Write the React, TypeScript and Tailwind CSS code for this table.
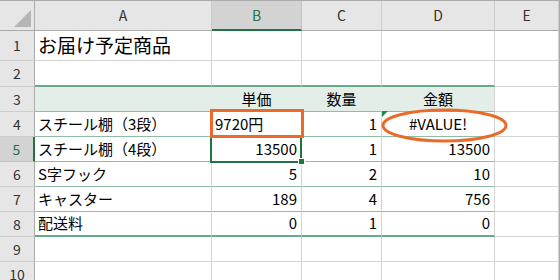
import React from "react";

type Align = "l" | "c" | "r";
type Cell = { text: string; align: Align };

const COLS = ["A", "B", "C", "D", "E"];

const ROWS: (Cell | null)[][] = [
  [{ text: "お届け予定商品", align: "l" }, null, null, null, null],
  [null, null, null, null, null],
  [null, { text: "単価", align: "c" }, { text: "数量", align: "c" }, { text: "金額", align: "c" }, null],
  [
    { text: "スチール棚（3段）", align: "l" },
    { text: "9720円", align: "l" },
    { text: "1", align: "r" },
    { text: "#VALUE!", align: "c" },
    null,
  ],
  [
    { text: "スチール棚（4段）", align: "l" },
    { text: "13500", align: "r" },
    { text: "1", align: "r" },
    { text: "13500", align: "r" },
    null,
  ],
  [
    { text: "S字フック", align: "l" },
    { text: "5", align: "r" },
    { text: "2", align: "r" },
    { text: "10", align: "r" },
    null,
  ],
  [
    { text: "キャスター", align: "l" },
    { text: "189", align: "r" },
    { text: "4", align: "r" },
    { text: "756", align: "r" },
    null,
  ],
  [
    { text: "配送料", align: "l" },
    { text: "0", align: "r" },
    { text: "1", align: "r" },
    { text: "0", align: "r" },
    null,
  ],
  [null, null, null, null, null],
  [null, null, null, null, null],
];

function alignClass(a: Align) {
  if (a === "c") return "justify-center";
  if (a === "r") return "justify-end pr-[4px]";
  return "justify-start pl-[3px]";
}

// border / fill for a body cell; r is the 1-based row number, c the column index (0 = A)
function cellClass(r: number, c: number) {
  const inTable = c <= 3;
  if (inTable && r === 2) return "bg-white border-r-[#d4d4d4] border-b-2 border-b-[#68a989]";
  if (inTable && r === 3) {
    if (c === 3) return "bg-[#e3eee8] border-r-[#d4d4d4] border-b border-b-[#8dbea5]";
    return "bg-[#e3eee8] border-r-[#e3eee8] border-b border-b-[#8dbea5]";
  }
  if (inTable && r >= 4 && r <= 7) return "bg-white border-r-[#d4d4d4] border-b border-b-[#8dbea5]";
  if (inTable && r === 8) return "bg-white border-r-[#d4d4d4] border-b-2 border-b-[#68a989]";
  return "bg-white border-r-[#d4d4d4] border-b border-b-[#d4d4d4]";
}

function ColHeader({ label }: { label: string }) {
  if (label === "B") {
    return (
      <div className="flex items-center justify-center bg-[#d3d3d3] border-r border-r-[#c4c4c4] border-b-2 border-b-[#217346] text-[14px] text-[#217346]">
        {label}
      </div>
    );
  }
  return (
    <div className="flex items-center justify-center bg-[#e6e6e6] border-r border-r-[#cdcdcd] border-b border-b-[#ababab] text-[14px] text-[#333]">
      {label}
    </div>
  );
}

function RowHeader({ n }: { n: number }) {
  if (n === 5) {
    return (
      <div className="flex items-center justify-center bg-[#d3d3d3] border-r-2 border-r-[#217346] border-b border-b-[#c4c4c4] text-[14px] text-[#217346]">
        {n}
      </div>
    );
  }
  return (
    <div className="flex items-center justify-center bg-[#e6e6e6] border-r border-r-[#ababab] border-b border-b-[#cdcdcd] text-[14px] text-[#333]">
      {n}
    </div>
  );
}

export default function App() {
  return (
    <div className="w-[560px] h-[280px] overflow-hidden bg-white border-t border-t-[#ababab] border-r border-r-[#ababab] font-['Noto_Sans_CJK_JP','Noto_Sans',sans-serif]">
      <div className="relative grid grid-cols-[35px_177px_90px_80px_113px_1fr] grid-rows-[30px_30px_26px_25px_25px_25px_25px_25px_25px_25px_25px]">
        {/* corner cell */}
        <div className="flex items-end justify-end bg-[#e6e6e6] border-r border-r-[#ababab] border-b border-b-[#ababab] pr-[3px] pb-[3px]">
          <svg width="17" height="17" viewBox="0 0 17 17">
            <polygon points="17,0 17,17 0,17" fill="#b5b5b5" />
          </svg>
        </div>
        {COLS.map((c) => (
          <ColHeader key={c} label={c} />
        ))}

        {ROWS.map((row, ri) => {
          const r = ri + 1;
          return (
            <React.Fragment key={r}>
              <RowHeader n={r} />
              {row.map((cell, ci) => (
                <div
                  key={ci}
                  className={`flex items-center border-r whitespace-nowrap text-black ${cellClass(r, ci)} ${
                    cell ? alignClass(cell.align) : ""
                  } ${r === 1 ? "text-[19px]" : "text-[15px]"}`}
                >
                  {cell ? cell.text : ""}
                </div>
              ))}
            </React.Fragment>
          );
        })}

        {/* active cell B5 with fill handle */}
        <div className="pointer-events-none absolute left-[210px] top-[134px] w-[92px] h-[28px] border-2 border-[#217346]" />
        <div className="pointer-events-none absolute left-[298px] top-[157px] w-[7px] h-[7px] bg-[#217346] border border-white" />

        {/* error indicator on D4 */}
        <svg className="pointer-events-none absolute left-[382px] top-[110px]" width="6" height="6" viewBox="0 0 6 6">
          <polygon points="0,0 6,0 0,6" fill="#1e8a4c" />
        </svg>

        {/* callouts */}
        <div className="pointer-events-none absolute left-[210px] top-[108px] w-[94px] h-[29px] border-[3px] border-[#eb6a29]" />
        <svg className="pointer-events-none absolute left-[380px] top-[106px]" width="130" height="37" viewBox="0 0 130 37">
          <ellipse cx="64.5" cy="18.5" rx="61.5" ry="15.5" fill="none" stroke="#eb6a29" strokeWidth="3" />
        </svg>
      </div>
    </div>
  );
}
